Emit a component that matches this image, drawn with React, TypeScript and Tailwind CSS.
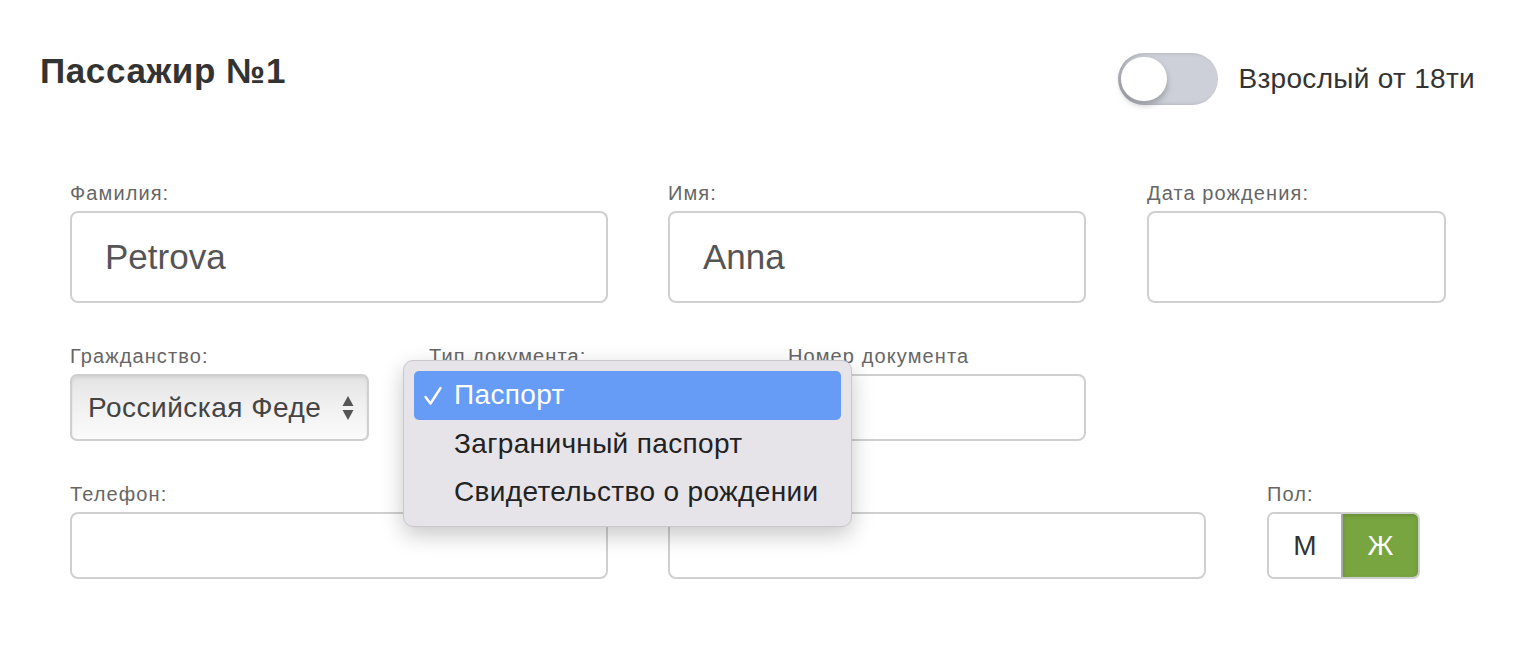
import { useState } from 'react';

function Field({ label, width, height, value, children }: { label?: string; width: string; height: string; value?: string; children?: React.ReactNode }) {
  return (
    <div className={`relative flex flex-col ${width}`}>
      <div className="mb-[8px] h-[20px] whitespace-nowrap text-[20px] leading-none tracking-[1.1px] text-[#666]">{label}</div>
      {children ?? (
        <div className={`flex items-center rounded-[8px] border-2 border-[#d0d0d0] bg-white pl-[33px] text-[35px] text-[#555] ${height}`}>
          {value}
        </div>
      )}
    </div>
  );
}

function CitizenSelect() {
  return (
    <div className="flex h-[67px] items-center justify-between rounded-[7px] border-2 border-[#cfcfcf] bg-gradient-to-b from-[#e4e4e4] via-[#f1f1f1] to-[#fbfbfb] pl-[16px] pr-[13px] text-[28px] tracking-[0.5px] text-[#444] shadow-[inset_0_2px_3px_rgba(0,0,0,0.08)]">
      <span>Российская Феде</span>
      <svg width="12" height="26" viewBox="0 0 12 26" className="text-[#555]">
        <path d="M6 1 L11.5 11 L0.5 11 Z" fill="currentColor" />
        <path d="M6 25 L11.5 15 L0.5 15 Z" fill="currentColor" />
      </svg>
    </div>
  );
}

function DocMenu() {
  const items = ['Паспорт', 'Заграничный паспорт', 'Свидетельство о рождении'];
  return (
    <div className="absolute left-[-26px] top-[14px] z-10 w-[449px] rounded-[10px] border border-[#c9c7cc] bg-[#e6e4e9] px-[10px] pb-[9px] pt-[10px] shadow-[0_8px_22px_rgba(0,0,0,0.22)]">
      {items.map((item, i) => (
        <div
          key={item}
          className={`relative flex h-[48.5px] items-center rounded-[5px] pl-[40px] text-[28px] tracking-[0.35px] ${i === 0 ? 'bg-[#679cf6] text-white' : 'text-[#222]'}`}
        >
          {i === 0 && (
            <svg width="20" height="20" viewBox="0 0 20 20" className="absolute left-[9px] top-[15px]">
              <path d="M2.5 11 L7.5 17.5 L17.5 2" fill="none" stroke="white" strokeWidth="2.4" strokeLinecap="round" strokeLinejoin="round" />
            </svg>
          )}
          {item}
        </div>
      ))}
    </div>
  );
}

export default function App() {
  const [adult, setAdult] = useState(false);
  const [sex, setSex] = useState<'m' | 'f'>('f');

  return (
    <div className="relative h-[650px] w-[1520px] overflow-hidden bg-white [font-family:Liberation_Sans,Arial,sans-serif]">
      <div className="flex items-start justify-between pl-[40px] pr-[45px] pt-[53px]">
        <h1 className="text-[35px] font-bold leading-none tracking-[0.6px] text-[#333]">Пассажир №1</h1>
        <div className="flex items-center gap-[20px]">
          <button
            type="button"
            onClick={() => setAdult((v) => !v)}
            className="relative h-[52px] w-[100px] rounded-full bg-[#cdd0d8] shadow-[inset_3px_0_4px_rgba(0,0,0,0.18)]"
            aria-label="Взрослый"
          >
            <span className={`absolute top-[4px] h-[44px] w-[46px] rounded-full bg-white shadow-[0_4px_6px_rgba(0,0,0,0.25)] ${adult ? 'left-[50px]' : 'left-[3px]'}`} />
          </button>
          <span className="text-[28px] tracking-[0.3px] text-[#333]">Взрослый от 18ти</span>
        </div>
      </div>

      <div className="mt-[78px] flex flex-col gap-[43px] pl-[70px]">
        <div className="flex gap-[60px]">
          <Field label="Фамилия:" width="w-[538px]" height="h-[92px]" value="Petrova" />
          <Field label="Имя:" width="w-[418px]" height="h-[92px]" value="Anna" />
          <div className="ml-[1px]">
            <Field label="Дата рождения:" width="w-[299px]" height="h-[92px]" />
          </div>
        </div>

        <div className="flex gap-[60px]">
          <Field label="Гражданство:" width="w-[299px]" height="h-[67px]">
            <CitizenSelect />
          </Field>
          <Field label="Тип документа:" width="w-[299px]" height="h-[67px]">
            <div className="h-[67px] rounded-[7px] border-2 border-[#d0d0d0] bg-white" />
            <DocMenu />
          </Field>
          <Field label="Номер документа" width="w-[298px]" height="h-[67px]" />
        </div>

        <div className="flex gap-[60px]">
          <Field label="Телефон:" width="w-[538px]" height="h-[67px]" />
          <Field label="Email:" width="w-[538px]" height="h-[67px]" />
          <div className="ml-[1px]">
            <Field label="Пол:" width="w-[153px]" height="h-[67px]">
              <div className="flex h-[67px] overflow-hidden rounded-[7px] border-2 border-[#cfcfcf] text-[28px]">
                <button
                  type="button"
                  onClick={() => setSex('m')}
                  className={`flex w-[72px] items-center justify-center ${sex === 'm' ? 'bg-[#78a540] text-white' : 'bg-white text-[#333]'}`}
                >
                  М
                </button>
                <button
                  type="button"
                  onClick={() => setSex('f')}
                  className={`flex flex-1 items-center justify-center border-l-2 border-[#a9a9a9] ${sex === 'f' ? 'bg-[#78a540] text-white shadow-[inset_0_2px_4px_rgba(0,0,0,0.15)]' : 'bg-white text-[#333]'}`}
                >
                  Ж
                </button>
              </div>
            </Field>
          </div>
        </div>
      </div>
    </div>
  );
}
